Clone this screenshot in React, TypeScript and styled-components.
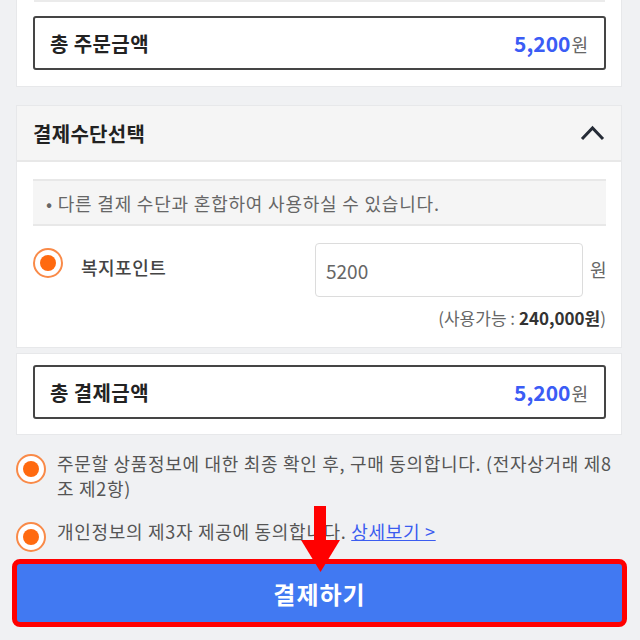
import React from "react";
import styled, { createGlobalStyle } from "styled-components";

const Global = createGlobalStyle`
  html, body { margin: 0; padding: 0; }
  body {
    background: #f0f1f3;
    font-family: "Noto Sans CJK KR", "Noto Sans", sans-serif;
    color: #333;
    width: 640px;
    height: 640px;
    overflow: hidden;
  }
`;

const Page = styled.div`
  position: relative;
  width: 640px;
  height: 640px;
  display: flex;
  flex-direction: column;
`;

const Card = styled.section<{ $top?: number; $pad?: string }>`
  margin: ${(p) => p.$top ?? 0}px 18px 0 16px;
  background: #fff;
  border: 1px solid #e7e8ea;
  border-top: ${(p) => (p.$top === 0 ? "none" : "1px solid #e7e8ea")};
  padding: ${(p) => p.$pad ?? "0 15px 16px 16px"};
`;

const PrevLine = styled.div`
  height: 0;
  border-bottom: 2px solid #ebebeb;
  margin: 0 1px 14px 1px;
`;

const TotalBox = styled.div`
  height: 50px;
  border: 2px solid #454545;
  border-radius: 3px;
  display: flex;
  align-items: center;
  justify-content: space-between;
  padding: 0 16px 0 15px;
`;

const TotalLabel = styled.span`
  font-size: 20px;
  font-weight: 700;
  color: #222;
  letter-spacing: 0.4px;
`;

const Amount = styled.span`
  display: flex;
  align-items: baseline;
`;

const AmountNum = styled.span`
  font-size: 21px;
  font-weight: 700;
  color: #3b5cf5;
`;

const Won = styled.span`
  font-size: 18px;
  color: #666;
  margin-left: 1px;
`;

const Header = styled.div`
  height: 54px;
  background: #f5f5f5;
  border-bottom: 2px solid #e8e8e8;
  display: flex;
  align-items: center;
  justify-content: space-between;
  padding: 0 14px 0 16px;
  margin: 0 -15px 0 -16px;
`;

const HeaderTitle = styled.h2`
  margin: 0;
  font-size: 20px;
  font-weight: 700;
  color: #222;
  letter-spacing: 0.3px;
`;

const Notice = styled.div`
  margin-top: 17px;
  height: 43px;
  background: #f5f5f5;
  border-top: 2px solid #e8e8e8;
  border-bottom: 2px solid #e8e8e8;
  display: flex;
  align-items: center;
  padding-left: 13px;
  font-size: 18px;
  letter-spacing: 0.8px;
  color: #666;
`;

const PointRow = styled.div`
  margin-top: 17px;
  display: flex;
  align-items: flex-start;
  height: 54px;
`;

const Radio = styled.span`
  flex: none;
  width: 30px;
  height: 30px;
  box-sizing: border-box;
  border-radius: 50%;
  border: 2px solid #f98a48;
  background: #fff;
  display: flex;
  align-items: center;
  justify-content: center;
  margin-top: 5px;
  &::after {
    content: "";
    width: 16px;
    height: 16px;
    border-radius: 50%;
    background: #ff6a10;
  }
`;

const PointLabel = styled.span`
  margin: 11px 0 0 18px;
  font-size: 18px;
  line-height: 26px;
  font-weight: 500;
  letter-spacing: 0.5px;
  color: #444;
  flex: 1;
`;

const Input = styled.input`
  width: 268px;
  height: 54px;
  box-sizing: border-box;
  border: 1px solid #dcdcdc;
  border-radius: 4px;
  padding: 0 10px;
  font-family: inherit;
  font-size: 19px;
  color: #666;
  outline: none;
`;

const Unit = styled.span`
  margin: 13px 0 0 7px;
  font-size: 18px;
  line-height: 26px;
  color: #666;
  width: 16px;
`;

const Avail = styled.div`
  margin-top: 8px;
  text-align: right;
  font-size: 17px;
  color: #666;
  b { color: #333; font-weight: 700; }
`;

const Agreements = styled.div`
  margin: 16px 16px 0 16px;
  display: flex;
  flex-direction: column;
  gap: 18px;
`;

const AgreeItem = styled.div`
  display: flex;
  align-items: flex-start;
  gap: 11px;
  ${Radio} { margin: 3px 0 -8px 0; }
`;

const AgreeText = styled.p`
  margin: 0;
  font-size: 18px;
  line-height: 25px;
  letter-spacing: 0.7px;
  color: #555;
  a { color: #3b5cf0; text-decoration: underline; }
`;

const PayButton = styled.button`
  margin: 15px 13px 0 12px;
  height: 68px;
  flex: none;
  box-sizing: border-box;
  border: 5px solid #ff0000;
  border-radius: 8px;
  background: #4179f2;
  color: #fff;
  font-family: inherit;
  font-size: 24px;
  font-weight: 700;
  letter-spacing: 1px;
  display: flex;
  align-items: center;
  justify-content: center;
  padding: 0;
`;

const Arrow = styled.svg`
  position: absolute;
  left: 300px;
  top: 506px;
  width: 41px;
  height: 67px;
`;

export default function App() {
  return (
    <>
      <Global />
      <Page>
        <Card $top={0}>
          <PrevLine />
          <TotalBox>
            <TotalLabel>총 주문금액</TotalLabel>
            <Amount>
              <AmountNum>5,200</AmountNum>
              <Won>원</Won>
            </Amount>
          </TotalBox>
        </Card>

        <Card $top={18} $pad="0 15px 17px 16px">
          <Header>
            <HeaderTitle>결제수단선택</HeaderTitle>
            <svg width="28" height="20" viewBox="0 0 28 20">
              <polyline points="3,16 13.5,5 24,16" fill="none" stroke="#252b36" strokeWidth="3" />
            </svg>
          </Header>
          <Notice>• 다른 결제 수단과 혼합하여 사용하실 수 있습니다.</Notice>
          <PointRow>
            <Radio />
            <PointLabel>복지포인트</PointLabel>
            <Input defaultValue="5200" />
            <Unit>원</Unit>
          </PointRow>
          <Avail>
            (사용가능 : <b>240,000원</b>)
          </Avail>
        </Card>

        <Card $top={5} $pad="11px 15px 15px 16px">
          <TotalBox>
            <TotalLabel>총 결제금액</TotalLabel>
            <Amount>
              <AmountNum>5,200</AmountNum>
              <Won>원</Won>
            </Amount>
          </TotalBox>
        </Card>

        <Agreements>
          <AgreeItem>
            <Radio />
            <AgreeText>주문할 상품정보에 대한 최종 확인 후, 구매 동의합니다. (전자상거래 제8조 제2항)</AgreeText>
          </AgreeItem>
          <AgreeItem>
            <Radio />
            <AgreeText>
              개인정보의 제3자 제공에 동의합니다. <a href="#">상세보기 &gt;</a>
            </AgreeText>
          </AgreeItem>
        </Agreements>

        <PayButton>결제하기</PayButton>

        <Arrow viewBox="0 0 41 67">
          <rect x="14" y="0" width="12" height="36" fill="#ff0000" />
          <polygon points="1,34 40,34 20.5,66" fill="#ff0000" />
        </Arrow>
      </Page>
    </>
  );
}
